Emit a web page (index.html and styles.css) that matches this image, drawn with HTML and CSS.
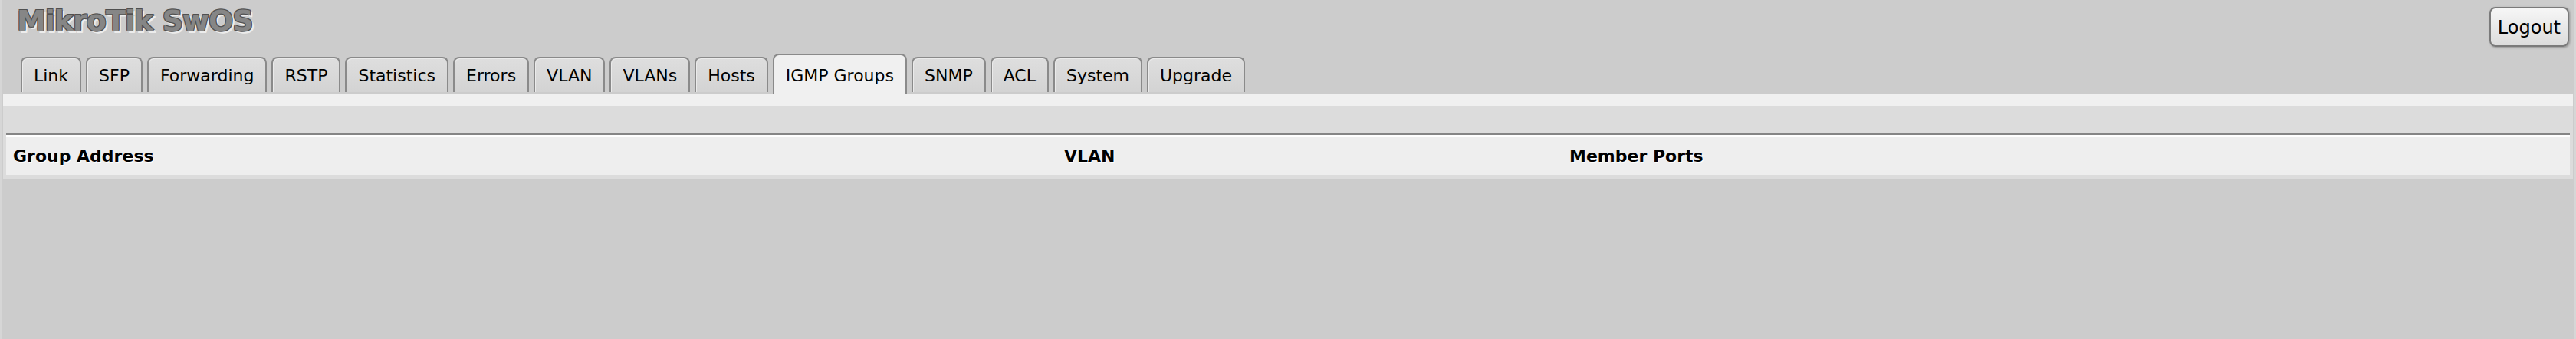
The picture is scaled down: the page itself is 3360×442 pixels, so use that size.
FILE: index.html
```html
<!DOCTYPE html>
<html>
<head>
<meta charset="utf-8">
<title>MikroTik SwOS</title>
<link rel="stylesheet" href="styles.css">
</head>
<body>
<div class="page">
  <div class="top">
    <div class="brand">MikroTik SwOS</div>
    <button class="logout">Logout</button>
  </div>
  <div class="tabs">
    <div class="tab">Link</div>
    <div class="tab">SFP</div>
    <div class="tab">Forwarding</div>
    <div class="tab">RSTP</div>
    <div class="tab">Statistics</div>
    <div class="tab">Errors</div>
    <div class="tab">VLAN</div>
    <div class="tab">VLANs</div>
    <div class="tab">Hosts</div>
    <div class="tab active">IGMP Groups</div>
    <div class="tab">SNMP</div>
    <div class="tab">ACL</div>
    <div class="tab">System</div>
    <div class="tab">Upgrade</div>
  </div>
  <div class="panel">
    <div class="panel-strip"></div>
    <div class="panel-body">
      <table class="grid">
        <colgroup>
          <col class="c-addr">
          <col class="c-vlan">
          <col class="c-ports">
        </colgroup>
        <thead>
          <tr>
            <th>Group Address</th>
            <th>VLAN</th>
            <th>Member Ports</th>
          </tr>
        </thead>
      </table>
    </div>
  </div>
</div>
</body>
</html>
```
FILE: styles.css
```css
html, body {
  margin: 0;
  padding: 0;
}
body {
  background: #cccccc;
  font-family: "DejaVu Sans", Verdana, sans-serif;
  color: #000;
}
.page {
  min-height: 442px;
  box-sizing: border-box;
  border-left: 2px solid #d6d6d6;
  border-right: 2px solid #d6d6d6;
  padding: 0 2px;
}
.top {
  height: 70px;
  display: flex;
  justify-content: space-between;
  align-items: flex-start;
}
.brand {
  margin: 8px 0 0 18px;
  font-size: 38px;
  line-height: 38px;
  font-weight: bold;
  letter-spacing: -1px;
  color: #868686;
  text-shadow: 1px 1px 0 #505050, -1px -1px 0 #505050, 1px -1px 0 #505050, -1px 1px 0 #505050, 3px 3px 0 #ececec, 2px 3px 0 #ececec, 3px 2px 0 #ececec;
}
.logout {
  margin: 9px 5px 0 0;
  font-family: "DejaVu Sans", Verdana, sans-serif;
  font-size: 24px;
  line-height: 28px;
  padding: 11px 9px 9px;
  border: 2px solid #7a7a7a;
  border-radius: 8px;
  background: linear-gradient(#f6f6f6, #dcdcdc);
  box-shadow: 1px 1px 3px rgba(0, 0, 0, 0.3);
  color: #000;
}
.tabs {
  display: flex;
  align-items: flex-end;
  padding-left: 23px;
  gap: 6px;
}
.tab {
  font-size: 22px;
  line-height: 26px;
  padding: 10px 15px 8px;
  margin-bottom: 2px;
  border: 2px solid #8a8a8a;
  border-bottom: 0;
  border-radius: 8px 8px 0 0;
  background: linear-gradient(#dedede, #d3d3d3);
  box-shadow: inset 1px 1px 0 #ebebeb;
}
.tab.active {
  padding: 14px 15px 10px;
  margin-bottom: 0;
  background: #f0f0f0;
  box-shadow: none;
}
.panel {
  background: #dcdcdc;
}
.panel-strip {
  height: 16px;
  background: #f0f0f0;
}
.panel-body {
  padding: 36px 4px 5px;
}
.grid {
  width: 100%;
  table-layout: fixed;
  border-collapse: separate;
  border-spacing: 0;
  border-top: 2px solid #858585;
  background: #eeeeee;
}
.c-addr { width: 1371px; }
.c-vlan { width: 659px; }
.grid th {
  text-align: left;
  font-size: 22px;
  line-height: 26px;
  font-weight: bold;
  padding: 13px 9px 11px;
  border-top: 2px solid #ffffff;
  text-shadow: 1px 1px 0 #ffffff;
}
```
